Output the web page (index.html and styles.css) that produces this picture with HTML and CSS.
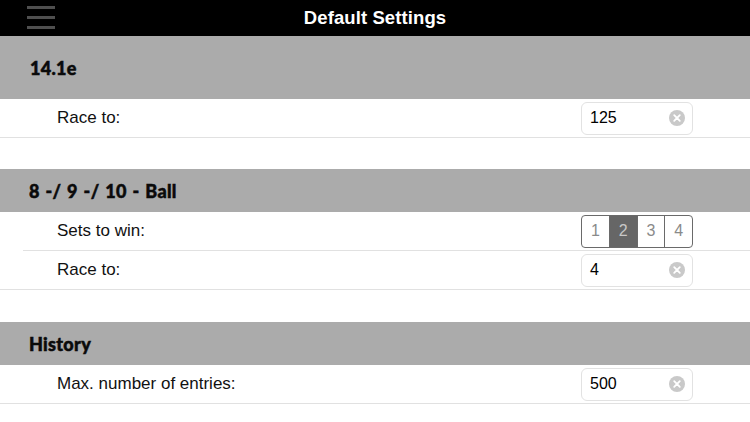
FILE: index.html
```html
<!DOCTYPE html>
<html>
<head>
<meta charset="utf-8">
<link rel="stylesheet" href="styles.css">
</head>
<body>
<header class="topbar">
  <div class="menu"><span></span><span></span><span></span></div>
  <h1 class="title">Default Settings</h1>
  <div></div>
</header>

<section class="group">
  <div class="group-head first">14.1e</div>
  <div class="row">
    <span class="label">Race to:</span>
    <div class="field"><span class="val">125</span><svg class="clear" viewBox="0 0 16 16" width="16" height="16"><circle cx="8" cy="8" r="8" fill="#c9c9c9"/><path d="M5.2 5.2 L10.8 10.8 M10.8 5.2 L5.2 10.8" stroke="#fff" stroke-width="1.8" stroke-linecap="round"/></svg></div>
  </div>
</section>

<section class="group">
  <div class="group-head">8 -/ 9 -/ 10 - Ball</div>
  <div class="row inset">
    <span class="label">Sets to win:</span>
    <div class="segments">
      <span class="seg">1</span><span class="seg on">2</span><span class="seg">3</span><span class="seg">4</span>
    </div>
  </div>
  <div class="row">
    <span class="label">Race to:</span>
    <div class="field"><span class="val">4</span><svg class="clear" viewBox="0 0 16 16" width="16" height="16"><circle cx="8" cy="8" r="8" fill="#c9c9c9"/><path d="M5.2 5.2 L10.8 10.8 M10.8 5.2 L5.2 10.8" stroke="#fff" stroke-width="1.8" stroke-linecap="round"/></svg></div>
  </div>
</section>

<section class="group">
  <div class="group-head">History</div>
  <div class="row">
    <span class="label">Max. number of entries:</span>
    <div class="field"><span class="val">500</span><svg class="clear" viewBox="0 0 16 16" width="16" height="16"><circle cx="8" cy="8" r="8" fill="#c9c9c9"/><path d="M5.2 5.2 L10.8 10.8 M10.8 5.2 L5.2 10.8" stroke="#fff" stroke-width="1.8" stroke-linecap="round"/></svg></div>
  </div>
</section>
</body>
</html>
```

FILE: styles.css
```css
* { box-sizing: border-box; }
html, body { margin: 0; padding: 0; background: #fff; }
body {
  font-family: "Liberation Sans", Arial, sans-serif;
  color: #000;
  width: 750px;
  height: 422px;
  overflow: hidden;
}
.topbar {
  height: 36px;
  background: #000;
  display: grid;
  grid-template-columns: 1fr auto 1fr;
  align-items: center;
}
.menu {
  display: flex;
  flex-direction: column;
  gap: 7px;
  padding-left: 27px;
  margin-top: -2px;
}
.menu span {
  display: block;
  width: 28px;
  height: 3px;
  background: #4f4f4f;
}
.title {
  margin: 0;
  color: #fff;
  font-size: 18.5px;
  font-weight: bold;
  letter-spacing: 0.1px;
}
.group { margin-bottom: 32px; }
.group:first-of-type { margin-bottom: 31px; }
.group-head {
  height: 43px;
  background: #ababab;
  display: flex;
  align-items: center;
  padding-left: 29px;
  font-family: Lato, "Liberation Sans", sans-serif;
  font-size: 18px;
  font-weight: 900;
  word-spacing: 1.2px;
  letter-spacing: 0.3px;
  -webkit-text-stroke: 0.5px #0a0a0a;
  color: #0a0a0a;
}
.group-head.first { height: 63px; padding-left: 30px; padding-top: 1px; }
.row {
  height: 39px;
  display: flex;
  align-items: center;
  justify-content: space-between;
  padding: 0 57px;
  border-bottom: 1px solid #e1e1e1;
}
.row.inset {
  margin-left: 23px;
  padding-left: 34px;
}
.label { font-size: 17px; color: #111; }
.field {
  width: 112px;
  height: 33px;
  border: 1px solid #e2e2e2;
  border-radius: 6px;
  display: flex;
  align-items: center;
  justify-content: space-between;
  padding: 0 7px 0 8px;
}
.val { font-size: 16px; color: #000; }
.clear { display: block; }
.segments {
  display: flex;
  width: 112px;
  height: 33px;
  border: 1px solid #6a6a6a;
  border-radius: 4px;
  overflow: hidden;
}
.seg {
  flex: 1;
  display: flex;
  align-items: center;
  justify-content: center;
  font-size: 16px;
  color: #8a8a8a;
  border-left: 1px solid #6a6a6a;
}
.seg:first-child { border-left: none; }
.seg.on { background: #666; color: #c8c8c8; }
```
